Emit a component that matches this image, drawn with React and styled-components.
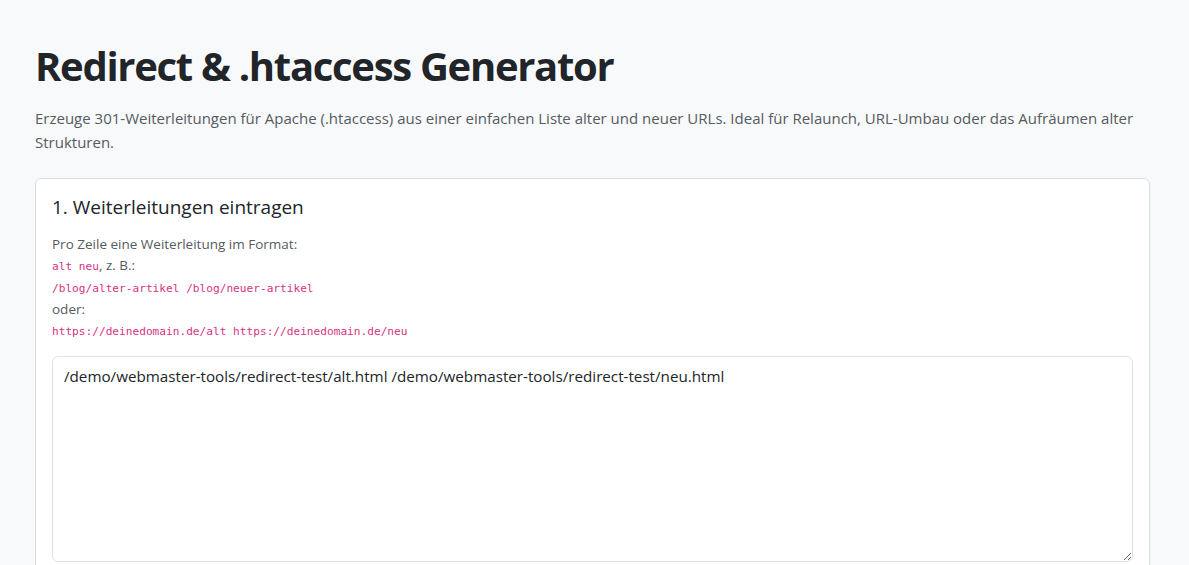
import React from 'react';
import styled, { createGlobalStyle } from 'styled-components';

const GlobalStyle = createGlobalStyle`
  * {
    box-sizing: border-box;
  }
  body {
    margin: 0;
    background: #f8f9fa;
    color: #212529;
    font-family: 'Open Sans', 'Noto Sans', sans-serif;
  }
`;

const Page = styled.main`
  padding: 42px 35px 0 35px;
  max-width: 1185px;
`;

const Title = styled.h1`
  font-size: 40px;
  font-weight: 700;
  line-height: 48px;
  margin: 0 0 16px 0;
  color: #212529;
  letter-spacing: -1.3px;
`;

const Lead = styled.p`
  font-size: 15px;
  line-height: 24px;
  color: #555b61;
  margin: 0 0 24px 0;
`;

const Card = styled.section`
  background: #fff;
  border: 1px solid #d9dde1;
  border-radius: 6px;
  padding: 16px;
`;

const CardTitle = styled.h2`
  font-size: 19px;
  font-weight: 400;
  line-height: 24px;
  margin: 0 0 15px 0;
  color: #212529;
`;

const Hint = styled.div`
  font-size: 13.5px;
  line-height: 21px;
  color: #555b61;
`;

const Code = styled.code`
  font-family: 'DejaVu Sans Mono', 'Liberation Mono', monospace;
  font-size: 11.15px;
  color: #d63384;
`;

const Input = styled.textarea`
  display: block;
  width: 100%;
  height: 206px;
  margin-top: 14px;
  padding: 7px 11px;
  font-family: 'Open Sans', 'Noto Sans', sans-serif;
  font-size: 15.2px;
  line-height: 24px;
  color: #212529;
  background: #fff;
  border: 1px solid #dee2e6;
  border-radius: 6px;
  resize: vertical;
  outline: none;
`;

export default function App() {
  return (
    <>
      <GlobalStyle />
      <Page>
        <Title>Redirect &amp; .htaccess Generator</Title>
        <Lead>
          Erzeuge 301-Weiterleitungen für Apache (.htaccess) aus einer einfachen Liste alter und
          neuer URLs. Ideal für Relaunch, URL-Umbau oder das Aufräumen alter Strukturen.
        </Lead>
        <Card>
          <CardTitle>1. Weiterleitungen eintragen</CardTitle>
          <Hint>
            Pro Zeile eine Weiterleitung im Format:
            <br />
            <Code>alt neu</Code>, z. B.:
            <br />
            <Code>/blog/alter-artikel /blog/neuer-artikel</Code>
            <br />
            oder:
            <br />
            <Code>https://deinedomain.de/alt https://deinedomain.de/neu</Code>
          </Hint>
          <Input
            defaultValue="/demo/webmaster-tools/redirect-test/alt.html /demo/webmaster-tools/redirect-test/neu.html"
          />
        </Card>
      </Page>
    </>
  );
}
